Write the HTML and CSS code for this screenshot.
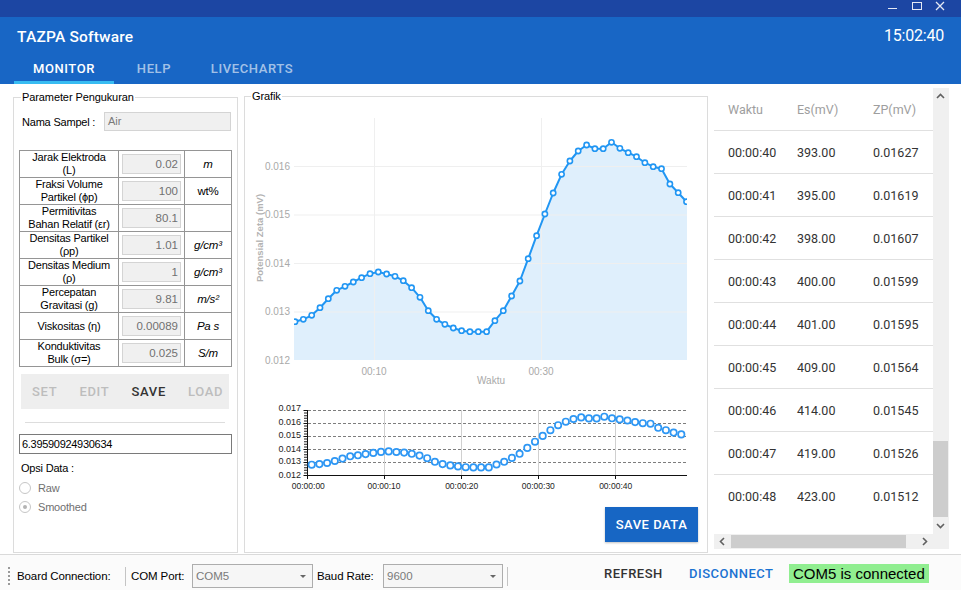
FILE: index.html
```html
<!DOCTYPE html>
<html lang="id">
<head>
<meta charset="utf-8">
<title>TAZPA Software</title>
<link rel="stylesheet" href="styles.css">
</head>
<body>
<div class="titlebar">
  <svg class="winctl" width="60" height="17" viewBox="886 0 60 17">
    <path class="wc" d="M888 8.5H897"/>
    <rect class="wc" x="912.5" y="2.5" width="9" height="7"/>
    <path class="wc wcx" d="M936 2L944 10M944 2L936 10"/>
  </svg>
</div>
<header class="header">
  <div class="header-top">
    <span class="app-title">TAZPA Software</span>
    <span class="clock">15:02:40</span>
  </div>
  <nav class="tabs">
    <div class="tab tab-monitor active">MONITOR</div>
    <div class="tab tab-help">HELP</div>
    <div class="tab tab-live">LIVECHARTS</div>
  </nav>
</header>

<main class="main">
  <section class="group params">
    <div class="group-title">Parameter Pengukuran</div>
    <div class="sample-row">
      <span class="sample-label">Nama Sampel :</span>
      <div class="sample-input">Air</div>
    </div>
    <div class="ptable">
      <div class="pc lbl">Jarak Elektroda<br>(L)</div><div class="pc"><div class="pin">0.02</div></div><div class="pc unit">m</div>
      <div class="pc lbl">Fraksi Volume<br>Partikel (ϕp)</div><div class="pc"><div class="pin">100</div></div><div class="pc unit up">wt%</div>
      <div class="pc lbl">Permitivitas<br>Bahan Relatif (εr)</div><div class="pc"><div class="pin">80.1</div></div><div class="pc unit"></div>
      <div class="pc lbl">Densitas Partikel<br>(ρp)</div><div class="pc"><div class="pin">1.01</div></div><div class="pc unit">g/cm³</div>
      <div class="pc lbl">Densitas Medium<br>(ρ)</div><div class="pc"><div class="pin">1</div></div><div class="pc unit">g/cm³</div>
      <div class="pc lbl">Percepatan<br>Gravitasi (g)</div><div class="pc"><div class="pin">9.81</div></div><div class="pc unit">m/s²</div>
      <div class="pc lbl">Viskositas (η)</div><div class="pc"><div class="pin">0.00089</div></div><div class="pc unit">Pa s</div>
      <div class="pc lbl">Konduktivitas<br>Bulk (σ=)</div><div class="pc"><div class="pin">0.025</div></div><div class="pc unit">S/m</div>
    </div>
    <div class="btnbar">
      <span class="fbtn">SET</span><span class="fbtn">EDIT</span><span class="fbtn on">SAVE</span><span class="fbtn">LOAD</span>
    </div>
    <div class="sep"></div>
    <div class="result">6.39590924930634</div>
    <div class="opsi">Opsi Data :</div>
    <div class="radio r1"><span class="rc"></span><span class="rl">Raw</span></div>
    <div class="radio r2"><span class="rc checked"></span><span class="rl">Smoothed</span></div>
  </section>

  <section class="group grafik">
    <div class="group-title">Grafik</div>
    <svg class="charts" width="462" height="397" viewBox="245 103 462 397">
      <defs>
        <clipPath id="plotclip"><rect x="294" y="100" width="393" height="262"/></clipPath>
        <marker id="dotA" markerUnits="userSpaceOnUse" markerWidth="8" markerHeight="8" refX="4" refY="4" overflow="visible">
          <circle class="mk-a" cx="4" cy="4" r="2.6"/>
        </marker>
        <marker id="dotB" markerUnits="userSpaceOnUse" markerWidth="9" markerHeight="9" refX="4.5" refY="4.5" overflow="visible">
          <circle class="mk-b" cx="4.5" cy="4.5" r="3.2"/>
        </marker>
      </defs>
      <g clip-path="url(#plotclip)">
        <polygon class="area" points="294,360 294,322 295,321.7 303.3,319.3 311.7,315.3 320,307.7 328.3,298.7 336.7,290.3 345,286.3 353.3,282 361.6,277.7 370,273.7 378.3,272 386.6,274 395,276.3 403.3,280.7 411.6,287.7 420,297.3 428.3,310.7 436.6,319.3 444.9,324.3 453.3,328 461.6,330.7 469.9,331.7 478.3,331.7 486.6,331.7 494.9,320.7 503.3,310.7 511.6,296 519.9,281 528.2,258.7 536.6,235.7 544.9,214 553.2,193 561.6,174.3 569.9,161 578.2,151 586.6,145 594.9,148.7 603.2,148.7 611.5,142.3 619.9,148.3 628.2,152.7 636.5,156.7 644.9,162.7 653.2,166.7 661.5,168.7 669.9,184 678.2,192.7 686.5,201.7 687,202 687,360"/>
        <path class="grid-main" d="M294 166.5H687M294 215H687M294 263.5H687M294 312H687M374.5 118V360M541.5 118V360"/>
        <polyline class="series" marker-start="url(#dotA)" marker-mid="url(#dotA)" marker-end="url(#dotA)" points="295,321.7 303.3,319.3 311.7,315.3 320,307.7 328.3,298.7 336.7,290.3 345,286.3 353.3,282 361.6,277.7 370,273.7 378.3,272 386.6,274 395,276.3 403.3,280.7 411.6,287.7 420,297.3 428.3,310.7 436.6,319.3 444.9,324.3 453.3,328 461.6,330.7 469.9,331.7 478.3,331.7 486.6,331.7 494.9,320.7 503.3,310.7 511.6,296 519.9,281 528.2,258.7 536.6,235.7 544.9,214 553.2,193 561.6,174.3 569.9,161 578.2,151 586.6,145 594.9,148.7 603.2,148.7 611.5,142.3 619.9,148.3 628.2,152.7 636.5,156.7 644.9,162.7 653.2,166.7 661.5,168.7 669.9,184 678.2,192.7 686.5,201.7"/>
      </g>
      <g class="lab-main">
        <text x="290" y="169.8">0.016</text>
        <text x="290" y="218.3">0.015</text>
        <text x="290" y="266.8">0.014</text>
        <text x="290" y="315.3">0.013</text>
        <text x="290" y="363.8">0.012</text>
      </g>
      <g class="lab-main mid">
        <text x="374" y="374.5">00:10</text>
        <text x="541" y="374.5">00:30</text>
        <text x="491" y="383.5">Waktu</text>
      </g>
      <text class="ytitle" transform="translate(262.5 238) rotate(-90)">Potensial Zeta (mV)</text>

      <path class="grid-dash" d="M308 410.5H687M308 423.5H687M308 436.5H687M308 449.5H687M308 462.5H687"/>
      <path class="grid-v" d="M384.5 410V475M461.5 410V475M538.5 410V475M615.5 410V475"/>
      <line class="minor" x1="305.5" y1="410" x2="305.5" y2="475"/>
      <path class="axis" d="M307.5 410V475.5M307.5 475.5H687M303.5 410.5H307.5M303.5 423.5H307.5M303.5 436.5H307.5M303.5 449.5H307.5M303.5 462.5H307.5M303.5 475.5H307.5M307.5 475V479M384.5 475V479M461.5 475V479M538.5 475V479M615.5 475V479"/>
      <g class="lab-small">
        <text x="301" y="411">0.017</text>
        <text x="301" y="425">0.016</text>
        <text x="301" y="438.3">0.015</text>
        <text x="301" y="451.6">0.014</text>
        <text x="301" y="464.3">0.013</text>
        <text x="301" y="477.6">0.012</text>
      </g>
      <g class="lab-small mid">
        <text x="308.3" y="489">00:00:00</text>
        <text x="384" y="489">00:00:10</text>
        <text x="461.7" y="489">00:00:20</text>
        <text x="538.3" y="489">00:00:30</text>
        <text x="615.7" y="489">00:00:40</text>
      </g>
      <polyline class="series2" marker-start="url(#dotB)" marker-mid="url(#dotB)" marker-end="url(#dotB)" points="311.7,464.7 319.4,464.1 327.1,463 334.8,461 342.5,458.6 350.2,456.3 357.9,455.3 365.6,454.1 373.3,452.9 381,451.9 388.7,451.4 396.4,452 404.1,452.6 411.8,453.8 419.5,455.6 427.2,458.2 434.9,461.8 442.6,464.1 450.3,465.4 458,466.4 465.7,467.2 473.4,467.4 481.1,467.4 488.8,467.4 496.5,464.5 504.2,461.8 511.9,457.9 519.6,453.8 527.3,447.9 535,441.7 542.7,435.9 550.4,430.2 558.1,425.2 565.8,421.7 573.5,419 581.2,417.4 588.9,418.4 596.6,418.4 604.3,416.7 612,418.3 619.7,419.4 627.4,420.5 635.1,422.1 642.8,423.2 650.5,423.7 658.2,427.8 665.9,430.2 673.6,432.6 681.3,434.4"/>
    </svg>
    <button class="save-data">SAVE DATA</button>
  </section>

  <section class="datapanel">
    <div class="dt">
      <div class="dt-row dt-head"><span>Waktu</span><span>Es(mV)</span><span>ZP(mV)</span></div>
      <div class="dt-row"><span>00:00:40</span><span>393.00</span><span>0.01627</span></div>
      <div class="dt-row"><span>00:00:41</span><span>395.00</span><span>0.01619</span></div>
      <div class="dt-row"><span>00:00:42</span><span>398.00</span><span>0.01607</span></div>
      <div class="dt-row"><span>00:00:43</span><span>400.00</span><span>0.01599</span></div>
      <div class="dt-row"><span>00:00:44</span><span>401.00</span><span>0.01595</span></div>
      <div class="dt-row"><span>00:00:45</span><span>409.00</span><span>0.01564</span></div>
      <div class="dt-row"><span>00:00:46</span><span>414.00</span><span>0.01545</span></div>
      <div class="dt-row"><span>00:00:47</span><span>419.00</span><span>0.01526</span></div>
      <div class="dt-row last"><span>00:00:48</span><span>423.00</span><span>0.01512</span></div>
    </div>
    <div class="vscroll">
      <div class="arrow"><svg width="16" height="17" viewBox="0 0 16 17"><polyline class="chev" points="4,10 7.5,6.5 11,10"/></svg></div>
      <div class="vtrack"></div>
      <div class="vthumb"></div>
      <div class="arrow"><svg width="16" height="17" viewBox="0 0 16 17"><polyline class="chev" points="4,7 7.5,10.5 11,7"/></svg></div>
    </div>
    <div class="hscroll">
      <div class="harrow"><svg width="17" height="15" viewBox="0 0 17 15"><polyline class="chev" points="10,4 6.5,7.5 10,11"/></svg></div>
      <div class="hthumb"></div>
      <div class="htrack"></div>
      <div class="harrow"><svg width="17" height="15" viewBox="0 0 17 15"><polyline class="chev" points="7,4 10.5,7.5 7,11"/></svg></div>
    </div>
    <div class="corner"></div>
  </section>
</main>

<footer class="status">
  <div class="toolstrip">
    <div class="grip"></div>
    <span class="ts-label ts-board">Board Connection:</span>
    <div class="ts-sep"></div>
    <span class="ts-label ts-port">COM Port:</span>
    <div class="combo c1"><span>COM5</span><i class="caret"></i></div>
    <span class="ts-label ts-baud">Baud Rate:</span>
    <div class="combo c2"><span>9600</span><i class="caret"></i></div>
    <div class="ts-sep s2"></div>
  </div>
  <div class="actions">
    <span class="act refresh">REFRESH</span>
    <span class="act disconnect">DISCONNECT</span>
    <span class="conn">COM5 is connected</span>
  </div>
</footer>
</body>
</html>
```

FILE: styles.css
```css
* { box-sizing: border-box; }
html, body { margin: 0; padding: 0; }
body {
  width: 961px;
  height: 590px;
  overflow: hidden;
  background: #fff;
  font-family: "Liberation Sans", Arial, sans-serif;
  font-size: 11px;
  color: #000;
}

/* ---------- title bar ---------- */
.titlebar {
  height: 17px;
  background: #1c46a3;
  display: flex;
  justify-content: flex-end;
}
.winctl { display: block; margin-right: 15px; }
.wc { fill: none; stroke: #e4e9f4; stroke-width: 1; }
.wcx { stroke-width: 1.3; }

/* ---------- header ---------- */
.header {
  height: 67px;
  background: #1866c5;
  color: #fff;
  display: flex;
  flex-direction: column;
}
.header-top {
  height: 40px;
  display: flex;
  align-items: center;
  justify-content: space-between;
  padding: 0 17px 0 17px;
}
.app-title {
  font-family: Roboto, sans-serif;
  font-weight: 500;
  font-size: 15.5px;
  letter-spacing: 0.2px;
}
.clock {
  font-family: Roboto, sans-serif;
  font-size: 16px;
  letter-spacing: -0.2px;
  margin-bottom: 4px;
}
.tabs {
  display: flex;
  padding-left: 14px;
  height: 27px;
}
.tab {
  height: 27px;
  line-height: 24px;
  text-align: center;
  font-family: Roboto, sans-serif;
  font-weight: 500;
  font-size: 13px;
  letter-spacing: 0.6px;
  color: rgba(255, 255, 255, 0.62);
  border-bottom: 3px solid transparent;
}
.tab.active { color: #fff; border-bottom-color: #38bcf2; }
.tab-monitor { width: 100px; }
.tab-help { width: 80px; }
.tab-live { width: 116px; }

/* ---------- main ---------- */
.main {
  height: 470px;
  display: flex;
  padding-left: 13px;
}
.group {
  border: 1px solid #dcdcdc;
  display: flex;
  flex-direction: column;
}
.group-title {
  align-self: flex-start;
  margin: -7px 0 0 7px;
  padding: 0 1px;
  line-height: 13px;
  height: 13px;
  background: #fff;
  letter-spacing: -0.1px;
}
.params { width: 225px; margin: 13px 0 1px 0; }
.grafik { width: 464px; margin: 12px 0 1px 6px; }
.grafik .group-title { margin-left: 6px; }

.sample-row {
  display: flex;
  align-items: center;
  height: 19px;
  margin-top: 8px;
  padding-left: 8px;
}
.sample-label { width: 82px; letter-spacing: -0.2px; }
.sample-input {
  width: 127px;
  height: 19px;
  background: #f0f0f0;
  border: 1px solid #d4d4d4;
  color: #7a7a7a;
  padding-left: 3px;
  line-height: 17px;
}

.ptable {
  display: grid;
  grid-template-columns: 99px 66px 47px;
  width: 213px;
  margin: 19px 0 0 5px;
  border-top: 1px solid #959595;
  border-left: 1px solid #959595;
}
.pc {
  height: 27px;
  border-right: 1px solid #959595;
  border-bottom: 1px solid #959595;
  display: flex;
  align-items: center;
  justify-content: center;
  text-align: center;
  line-height: 13px;
  letter-spacing: -0.2px;
}
.pin {
  width: 59px;
  height: 20px;
  background: #f0f0f0;
  border: 1px solid #d4d4d4;
  color: #707070;
  text-align: right;
  padding-right: 2px;
  line-height: 18px;
  font-size: 11.5px;
  letter-spacing: 0;
}
.unit { font-style: italic; font-size: 11.5px; }
.unit.up { font-style: normal; }

.btnbar {
  display: flex;
  align-items: center;
  width: 208px;
  height: 35px;
  margin: 7px 0 0 7px;
  background: #eeeeee;
}
.fbtn {
  padding: 0 11px;
  font-family: Roboto, sans-serif;
  font-weight: 500;
  font-size: 13px;
  letter-spacing: 0.7px;
  color: #bdbdbd;
}
.fbtn.on { color: #333; }

.sep {
  width: 200px;
  height: 1px;
  margin: 13px 0 0 11px;
  background: #dddddd;
}
.result {
  width: 213px;
  height: 20px;
  margin: 11px 0 0 5px;
  border: 1px solid #7a7a7a;
  padding-left: 2px;
  line-height: 18px;
  font-size: 11px;
  letter-spacing: -0.3px;
}
.opsi {
  margin: 8px 0 0 7px;
  line-height: 13px;
  height: 13px;
  letter-spacing: -0.2px;
}
.radio {
  display: flex;
  align-items: center;
  height: 16px;
  margin-left: 5px;
}
.r1 { margin-top: 5px; }
.r2 { margin-top: 3px; }
.rc {
  width: 12px;
  height: 12px;
  border: 1px solid #c6c6c6;
  border-radius: 50%;
  background: #fff;
  display: flex;
  align-items: center;
  justify-content: center;
}
.rc.checked::after {
  content: "";
  width: 4px;
  height: 4px;
  border-radius: 50%;
  background: #b4b4b4;
}
.rl { margin-left: 7px; color: #707070; letter-spacing: -0.2px; }

/* ---------- charts ---------- */
.charts { display: block; }
.area { fill: #dfeffc; }
.grid-main { fill: none; stroke: #efefef; stroke-width: 1; }
.series { fill: none; stroke: #2196f3; stroke-width: 2; stroke-linejoin: round; }
.mk-a { fill: #fff; stroke: #2196f3; stroke-width: 1.6; }
.mk-b { fill: #fff; stroke: #2e97f4; stroke-width: 1.7; }
.series2 { fill: none; stroke: none; }
.lab-main text {
  font-family: "Liberation Sans", Arial, sans-serif;
  font-size: 10px;
  fill: #a9a9a9;
  text-anchor: end;
}
.lab-main.mid text { text-anchor: middle; }
.ytitle {
  font-family: "Liberation Sans", Arial, sans-serif;
  font-size: 9.5px;
  font-weight: bold;
  fill: #b3b3b3;
  text-anchor: middle;
}
.grid-dash { fill: none; stroke: #7d7d7d; stroke-width: 1; stroke-dasharray: 3 2; }
.grid-v { fill: none; stroke: #d0d0d0; stroke-width: 1; }
.minor { stroke: #222; stroke-width: 3; stroke-dasharray: 1 1.6; }
.axis { fill: none; stroke: #111; stroke-width: 1; }
.lab-small text {
  font-family: "Liberation Sans", Arial, sans-serif;
  font-size: 9px;
  fill: #1e1e1e;
  text-anchor: end;
}
.lab-small.mid text { font-size: 8.5px; text-anchor: middle; }

.save-data {
  align-self: flex-end;
  width: 93px;
  height: 35px;
  margin: 7px 9px 0 0;
  border: 0;
  padding: 0;
  background: #1766c4;
  color: #fff;
  font-family: Roboto, sans-serif;
  font-weight: 500;
  font-size: 13px;
  letter-spacing: 0.5px;
  box-shadow: 0 1px 2px rgba(0,0,0,0.25);
}

/* ---------- data panel ---------- */
.datapanel {
  width: 235px;
  margin: 4px 0 5px 6px;
  display: grid;
  grid-template-columns: 219px 16px;
  grid-template-rows: 446px 15px;
}
.dt { overflow: hidden; background: #fff; }
.dt-row {
  display: grid;
  grid-template-columns: 69px 76px 1fr;
  align-items: center;
  height: 43px;
  padding-left: 14px;
  border-bottom: 1px solid #e0e0e0;
  font-family: Roboto, sans-serif;
  font-size: 12.5px;
  color: #333;
}
.dt-row.last { border-bottom: 0; }
.dt-head { color: #9e9e9e; }
.vscroll {
  background: #f0f0f0;
  display: flex;
  flex-direction: column;
}
.arrow { height: 17px; }
.arrow svg, .harrow svg { display: block; }
.vtrack { flex: 1; }
.vthumb { height: 76px; margin-right: 1px; background: #cdcdcd; }
.chev { fill: none; stroke: #606060; stroke-width: 1.6; }
.hscroll {
  background: #f0f0f0;
  display: flex;
  align-items: center;
}
.harrow { width: 17px; height: 15px; }
.hthumb { width: 175px; height: 13px; background: #cdcdcd; }
.htrack { flex: 1; }
.corner { background: #f0f0f0; }

/* ---------- status bar ---------- */
.status {
  height: 36px;
  border-top: 1px solid #dadada;
  background: #fbfbfb;
  display: flex;
  align-items: flex-start;
}
.toolstrip {
  display: flex;
  align-items: center;
  height: 24px;
  margin-top: 9px;
  padding-left: 8px;
}
.grip {
  width: 2px;
  height: 19px;
  background: repeating-linear-gradient(to bottom, #9a9a9a 0 2px, transparent 2px 4px);
}
.ts-label {
  font-size: 11.5px;
  white-space: nowrap;
  letter-spacing: -0.1px;
}
.ts-board { width: 108px; margin-left: 7px; }
.ts-sep { width: 1px; height: 19px; background: #c4c4c4; }
.ts-port { width: 61px; margin-left: 5px; }
.ts-baud { width: 66px; margin-left: 4px; }
.combo {
  height: 24px;
  border: 1px solid #adadad;
  background: #f6f6f6;
  display: flex;
  align-items: center;
  justify-content: space-between;
  padding: 0 6px 0 3px;
  color: #7a7a7a;
  font-size: 11.5px;
}
.c1 { width: 121px; }
.c2 { width: 120px; }
.caret {
  width: 0;
  height: 0;
  border-left: 3px solid transparent;
  border-right: 3px solid transparent;
  border-top: 3px solid #666;
}
.ts-sep.s2 { margin-left: 4px; }
.actions {
  margin-left: auto;
  margin-right: 32px;
  margin-top: 8px;
  display: flex;
  align-items: center;
  height: 20px;
}
.act {
  font-family: Roboto, sans-serif;
  font-weight: 500;
  font-size: 13px;
  letter-spacing: 0.5px;
  white-space: nowrap;
}
.refresh { width: 58px; margin-right: 27px; color: #333; }
.disconnect { width: 83px; margin-right: 17px; color: #1a72d2; }
.conn {
  width: 140px;
  height: 19px;
  line-height: 19px;
  padding-left: 4px;
  background: #90ee90;
  font-size: 15px;
  white-space: nowrap;
}
```
